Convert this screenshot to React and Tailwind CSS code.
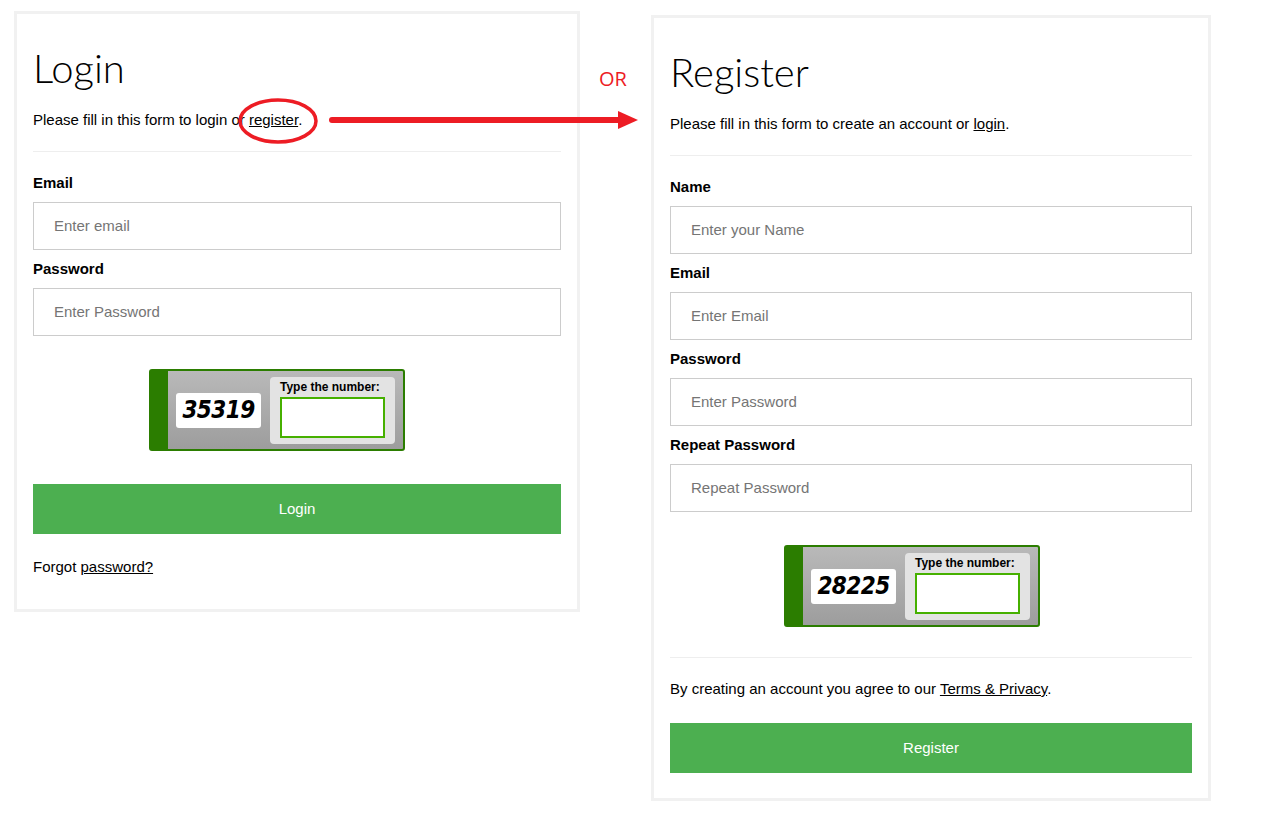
import React from 'react'

const sans = { fontFamily: '"Liberation Sans", Arial, sans-serif' }

const Captcha = ({ number, className }) => {
  return (
    <div className={`relative flex h-[82px] w-[256px] rounded-[3px] border-2 border-[#2b7d00] bg-gradient-to-b from-[#b9b9b9] to-[#9d9d9d] ${className}`}>
      <div className="w-[17px] shrink-0 bg-[#2b7d00]" />
      <div className="flex flex-1 items-center pl-[8px]">
        <div className="flex h-[35px] w-[85px] items-center justify-center rounded-[3px] bg-white">
          <span
            className="text-[24px] font-bold italic leading-none tracking-tight text-black"
            style={{ fontFamily: '"DejaVu Sans Condensed", "Liberation Sans", sans-serif' }}
          >
            {number}
          </span>
        </div>
        <div className="ml-[9px] flex h-[67px] w-[125px] flex-col rounded-[4px] bg-[#e3e3e3] px-[10px] pt-[2px]">
          <span className="text-[12px] font-bold leading-[16px] text-black">Type the number:</span>
          <div className="mt-[2px] h-[41px] w-[105px] border-2 border-[#46b000] bg-white" />
        </div>
      </div>
    </div>
  )
}

const Field = ({ label, placeholder }) => (
  <div>
    <div className="text-[15px] font-bold leading-[20px] text-black">{label}</div>
    <div className="mt-[9px] flex h-[48px] items-center border border-[#cccccc] bg-white pl-[20px] text-[15px] text-[#757575]">
      {placeholder}
    </div>
  </div>
)

const Title = ({ children }) => (
  <h1
    className="text-[40px] font-light leading-[48px] text-black"
    style={{ fontFamily: 'Lato, "Open Sans", sans-serif' }}
  >
    {children}
  </h1>
)

const LoginCard = () => (
  <div className="mt-[11px] ml-[14px] w-[566px] border-[3px] border-[#f1f1f1] bg-white px-[16px] pt-[30px] pb-[32px]">
    <Title>Login</Title>
    <p className="mt-[18px] text-[15px] leading-[20px] text-black">
      Please fill in this form to login or <span className="underline">register</span>.
    </p>
    <hr className="mt-[21px] border-t border-[#eeeeee]" />
    <div className="mt-[21px] flex flex-col gap-[9px]">
      <Field label="Email" placeholder="Enter email" />
      <Field label="Password" placeholder="Enter Password" />
    </div>
    <Captcha number="35319" className="mt-[33px] ml-[116px]" />
    <div className="mt-[33px] flex h-[50px] items-center justify-center bg-[#4caf50] text-[15px] text-white">
      Login
    </div>
    <p className="mt-[23px] text-[15px] leading-[20px] text-black">
      Forgot <span className="underline">password?</span>
    </p>
  </div>
)

const RegisterCard = () => (
  <div className="mt-[15px] ml-[71px] w-[560px] border-[3px] border-[#f1f1f1] bg-white px-[16px] pt-[30px] pb-[25px]">
    <Title>Register</Title>
    <p className="mt-[18px] text-[15px] leading-[20px] text-black">
      Please fill in this form to create an account or <span className="underline">login</span>.
    </p>
    <hr className="mt-[21px] border-t border-[#eeeeee]" />
    <div className="mt-[21px] flex flex-col gap-[9px]">
      <Field label="Name" placeholder="Enter your Name" />
      <Field label="Email" placeholder="Enter Email" />
      <Field label="Password" placeholder="Enter Password" />
      <Field label="Repeat Password" placeholder="Repeat Password" />
    </div>
    <Captcha number="28225" className="mt-[33px] ml-[114px]" />
    <hr className="mt-[30px] border-t border-[#eeeeee]" />
    <p className="mt-[21px] text-[15px] leading-[20px] text-black">
      By creating an account you agree to our <span className="underline">Terms &amp; Privacy</span>.
    </p>
    <div className="mt-[24px] flex h-[50px] items-center justify-center bg-[#4caf50] text-[15px] text-white">
      Register
    </div>
  </div>
)

export default function App() {
  return (
    <div className="relative h-[830px] w-[1266px] overflow-hidden bg-white" style={sans}>
      <div className="flex items-start">
        <LoginCard />
        <RegisterCard />
      </div>

      {/* annotation: circle + arrow + OR */}
      <span
        className="absolute left-[599px] top-[64px] text-[20px] text-[#ed1c24]"
        style={{ fontFamily: '"Open Sans", sans-serif' }}
      >
        OR
      </span>
      <svg className="absolute left-0 top-0" width="1266" height="830" viewBox="0 0 1266 830">
        <ellipse cx="278" cy="121" rx="38" ry="21" fill="none" stroke="#ed1c24" strokeWidth="3.5" />
        <line x1="332" y1="120" x2="622" y2="120" stroke="#ed1c24" strokeWidth="6" strokeLinecap="round" />
        <polygon points="618,111 638,120 618,129" fill="#ed1c24" />
      </svg>
    </div>
  )
}
